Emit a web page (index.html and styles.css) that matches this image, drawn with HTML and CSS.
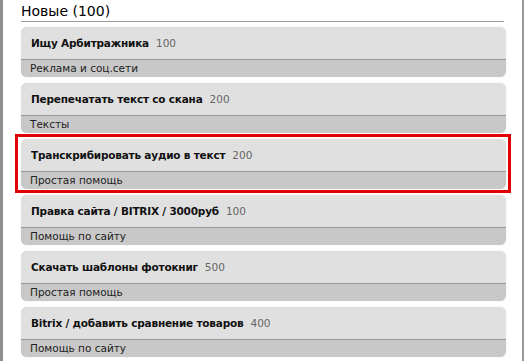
FILE: index.html
```html
<!DOCTYPE html>
<html lang="ru">
<head>
  <meta charset="UTF-8">
  <link rel="stylesheet" href="styles.css">
</head>
<body>
  <div class="page">
    <h2 class="section-title">Новые (100)</h2>

    <div class="task-list">
      <div class="task">
        <div class="task-head"><span class="task-name">Ищу Арбитражника</span><span class="task-price">100</span></div>
        <div class="task-cat">Реклама и соц.сети</div>
      </div>

      <div class="task">
        <div class="task-head"><span class="task-name">Перепечатать текст со скана</span><span class="task-price">200</span></div>
        <div class="task-cat">Тексты</div>
      </div>

      <div class="task task-marked">
        <div class="task-head"><span class="task-name">Транскрибировать аудио в текст</span><span class="task-price">200</span></div>
        <div class="task-cat">Простая помощь</div>
      </div>

      <div class="task">
        <div class="task-head"><span class="task-name">Правка сайта / BITRIX / 3000руб</span><span class="task-price">100</span></div>
        <div class="task-cat">Помощь по сайту</div>
      </div>

      <div class="task">
        <div class="task-head"><span class="task-name">Скачать шаблоны фотокниг</span><span class="task-price">500</span></div>
        <div class="task-cat">Простая помощь</div>
      </div>

      <div class="task">
        <div class="task-head"><span class="task-name">Bitrix / добавить сравнение товаров</span><span class="task-price">400</span></div>
        <div class="task-cat">Помощь по сайту</div>
      </div>
    </div>
  </div>
</body>
</html>
```

FILE: styles.css
```css
body {
  margin: 0;
  padding: 0;
  background-color: #fff;
  font-family: 'DejaVu Sans', Verdana, sans-serif;
  color: #111;
}
.page {
  width: 485px;
  height: 361px;
  margin-right: 2px;
  padding: 0 16px 0 18px;
  border-left: 3px solid #8f8f8f;
  border-right: 2px solid #999;
  overflow: hidden;
}
.section-title {
  margin: 0 2px 0 0;
  padding-top: 2px;
  font-size: 14px;
  font-weight: normal;
  line-height: 19px;
  color: #000;
  border-bottom: 1px solid #999;
}
.task-list {
  display: flex;
  flex-direction: column;
  gap: 6px;
  margin-top: 5px;
}
.task {
  border-radius: 6px;
  overflow: hidden;
  background-color: #e0e0e0;
  box-shadow: 0 0 1px #c4c4c4;
}
/* red annotation frame */
.task-marked {
  position: relative;
  overflow: visible;
}
.task-marked::after {
  content: "";
  position: absolute;
  top: -5px;
  bottom: -4px;
  left: -6px;
  right: -5px;
  border: 3px solid #e30000;
  pointer-events: none;
}
.task-marked .task-head {
  border-radius: 6px 6px 0 0;
}
.task-marked .task-cat {
  border-radius: 0 0 6px 6px;
}
.task-head {
  height: 32px;
  line-height: 32px;
  padding-left: 10px;
  font-size: 10.5px;
  border-bottom: 1px solid #999;
}
.task-name {
  font-weight: bold;
  letter-spacing: -0.2px;
  color: #111;
}
.task-price {
  margin-left: 7px;
  color: #666;
}
.task-cat {
  height: 17px;
  line-height: 17px;
  padding-left: 9px;
  font-size: 10.5px;
  color: #222;
  background-color: #c8c8c8;
}
```
